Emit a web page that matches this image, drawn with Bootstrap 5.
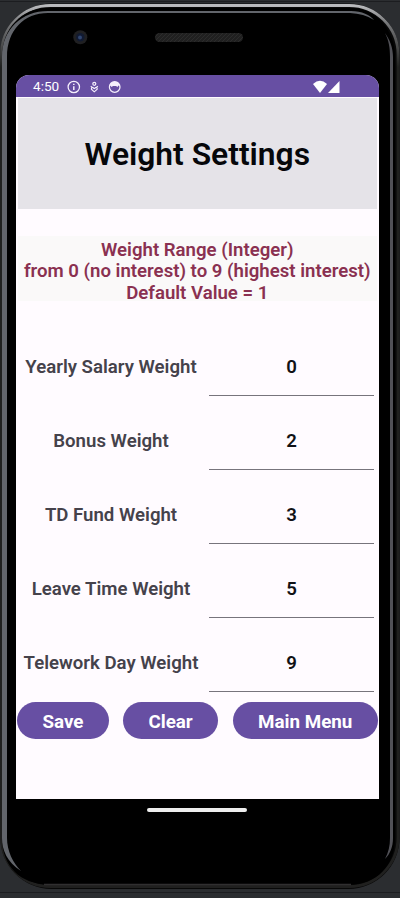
<!DOCTYPE html>
<html lang="en">
<head>
<meta charset="utf-8">
<meta name="viewport" content="width=device-width, initial-scale=1">
<title>Weight Settings</title>
<link href="https://cdn.jsdelivr.net/npm/bootstrap@5.3.0/dist/css/bootstrap.min.css" rel="stylesheet">
<style>
body{width:400px;height:898px;background:#2b2d30;font-family:Roboto,"Liberation Sans",sans-serif;font-weight:600;font-size:18.62px;line-height:21.33px;overflow:hidden}
.device{width:400px;height:898px;padding:75px 21px 0 16px}
.shell{left:0;top:0;z-index:0}
.screen{z-index:1;width:363px;height:724px;background:#fffbff;border-radius:13px 13px 0 0;overflow:hidden}
.status{height:22px;background:#674fa3;color:#fff;font-size:13.6px;font-weight:400;padding:1px 39px 0 17px}
.clock{width:34px}
.hero{height:111px;margin:1px 2px 0 1.5px;background:#e5e3e8;color:#06070a;font-size:31.8px;font-weight:600;line-height:38px;padding-top:1px}
.hint{height:65px;margin:27px 2px 28.5px 1.5px;background:#faf9f9;color:#8a3151;padding-top:4px;text-align:center;white-space:nowrap}
.entry{height:74px;padding-right:5px}
.entry label{width:190px;padding-top:27.5px;color:#45424b;white-space:nowrap;text-align:center}
.entry .form-control{width:165px;height:66px;margin-left:3px;padding:9px 0 0;border:0;border-bottom:1px solid #77747c;border-radius:0;background:none;color:#111216;font-size:18.62px;font-weight:600;text-align:center}
.actions{padding:2.5px 1px 0 1.3px}
.action{height:37px;padding:2px 0 0;border:0;background:#674fa3;color:#fff;font-size:18.8px;font-weight:700;line-height:37px;white-space:nowrap}
.action:hover{background:#5a4391;color:#fff}
.save{width:91.4px}.clear{width:95px}.menu{width:145.5px}
.homebar{width:100px;height:4px;margin:9px 0 0 131px;background:#eee;z-index:1}
</style>
<script src="https://cdn.jsdelivr.net/npm/bootstrap@5.3.0/dist/js/bootstrap.bundle.min.js"></script>
</head>
<body>
<div class="device position-relative">
  <svg class="shell position-absolute" width="400" height="898" viewBox="0 0 400 898" aria-hidden="true">
    <defs>
      <linearGradient id="rim" x1="0" y1="0" x2="0" y2="1"><stop offset="0" stop-color="#b9babd"/><stop offset=".02" stop-color="#77787a"/><stop offset=".07" stop-color="#20211f"/><stop offset="1" stop-color="#20201f"/></linearGradient>
      <pattern id="mesh" width="4" height="4" patternUnits="userSpaceOnUse"><path d="M0 0h4v4H0z" fill="#202020"/><path d="M0 4 4 0" stroke="#2c2c2c"/></pattern>
    </defs>
    <path d="M0 1.500h400M0 892.500h400" stroke="#1c1d20"/>
    <rect x=".5" y="3.500" width="399" height="885.500" rx="51" fill="#080808"/>
    <rect x="1.500" y="5.500" width="396.500" height="881" rx="49" fill="none" stroke="url(#rim)" stroke-width="2.800"/>
    <path d="M48 8H351C376 8 395 30 395 57V838C395 866 376 884.500 350 884.500H49C20 884.500 2 866 2 838V57C2 28 22 8 48 8Z" fill="#000"/>
    <path d="M48 11H351C362 11 370 15 374 20Q364 13.500 350 13H48C24 13 7 30 7 57V838C7 851 13 863 21 871C7 862 2 850 2 838V57C2 29 22 11 48 11Z" fill="#62656b"/>
    <path d="M385 33C390 40 393 48 393 57V838C393 847 390 854 385 859C388.500 852 390 846 390 838V57C390 48 389 41 385 33Z" fill="#515157"/>
    <path d="M44 884.500H351" stroke="#302f30" stroke-width="1.500"/>
    <circle cx="80.300" cy="37.200" r="7" fill="#202022"/><circle cx="80.300" cy="37.200" r="4.200" fill="#111a31"/><circle cx="80" cy="37.400" r="2" fill="#30456f"/>
    <rect x="155" y="33" width="88" height="9" rx="4.500" fill="url(#mesh)"/>
  </svg>

  <main class="screen position-relative d-flex flex-column">
    <div class="status d-flex align-items-center">
      <span class="clock">4:50</span>
      <svg width="54" height="16" viewBox="0 0 54 16" fill="none" stroke="#f5effc" stroke-width="1.250" aria-hidden="true">
        <circle cx="6.800" cy="8" r="5.700"/><path d="M6.800 7.200v3.800M6.800 4.700v1.400" stroke-width="1.500"/>
        <circle cx="27.300" cy="4.800" r="1.500"/><path d="M23.700 7.300 27.300 9.600 30.900 7.300M27.300 12.800 24.400 10.200Q24.300 8 26 8.600L27.300 9.600 28.600 8.600Q30.300 8 30.200 10.200Z" stroke-width="1.100"/>
        <circle cx="47.700" cy="8" r="5.300"/><path d="M42.500 7.500Q43 2.700 47.700 2.700T52.900 7.500L51.500 6.500 50.500 8 49 7H46L44.500 8 43.500 6.500Z" fill="#f5effc" stroke="none"/>
      </svg>
      <svg class="ms-auto" width="27" height="14" viewBox="0 0 27 14" fill="#fff" aria-hidden="true"><path d="M0 4Q7-2.500 14 4L7 13Z"/><path d="M26.500 1V13H15Z"/></svg>
    </div>
    <h1 class="hero d-flex align-items-center justify-content-center mb-0">Weight Settings</h1>
    <p class="hint">Weight Range (Integer)<br>from 0 (no interest) to 9 (highest interest)<br>Default Value = 1</p>
    <form>
      <div class="entry d-flex align-items-start"><label for="salary">Yearly Salary Weight</label><input id="salary" class="form-control shadow-none" value="0"></div>
      <div class="entry d-flex align-items-start"><label for="bonus">Bonus Weight</label><input id="bonus" class="form-control shadow-none" value="2"></div>
      <div class="entry d-flex align-items-start"><label for="fund">TD Fund Weight</label><input id="fund" class="form-control shadow-none" value="3"></div>
      <div class="entry d-flex align-items-start"><label for="leave">Leave Time Weight</label><input id="leave" class="form-control shadow-none" value="5"></div>
      <div class="entry d-flex align-items-start"><label for="telework">Telework Day Weight</label><input id="telework" class="form-control shadow-none" value="9"></div>
      <div class="actions d-flex justify-content-between">
        <button type="button" class="action save btn rounded-pill">Save</button>
        <button type="button" class="action clear btn rounded-pill">Clear</button>
        <button type="button" class="action menu btn rounded-pill">Main Menu</button>
      </div>
    </form>
  </main>
  <div class="homebar position-relative rounded-pill"></div>
</div>
</body>
</html>
